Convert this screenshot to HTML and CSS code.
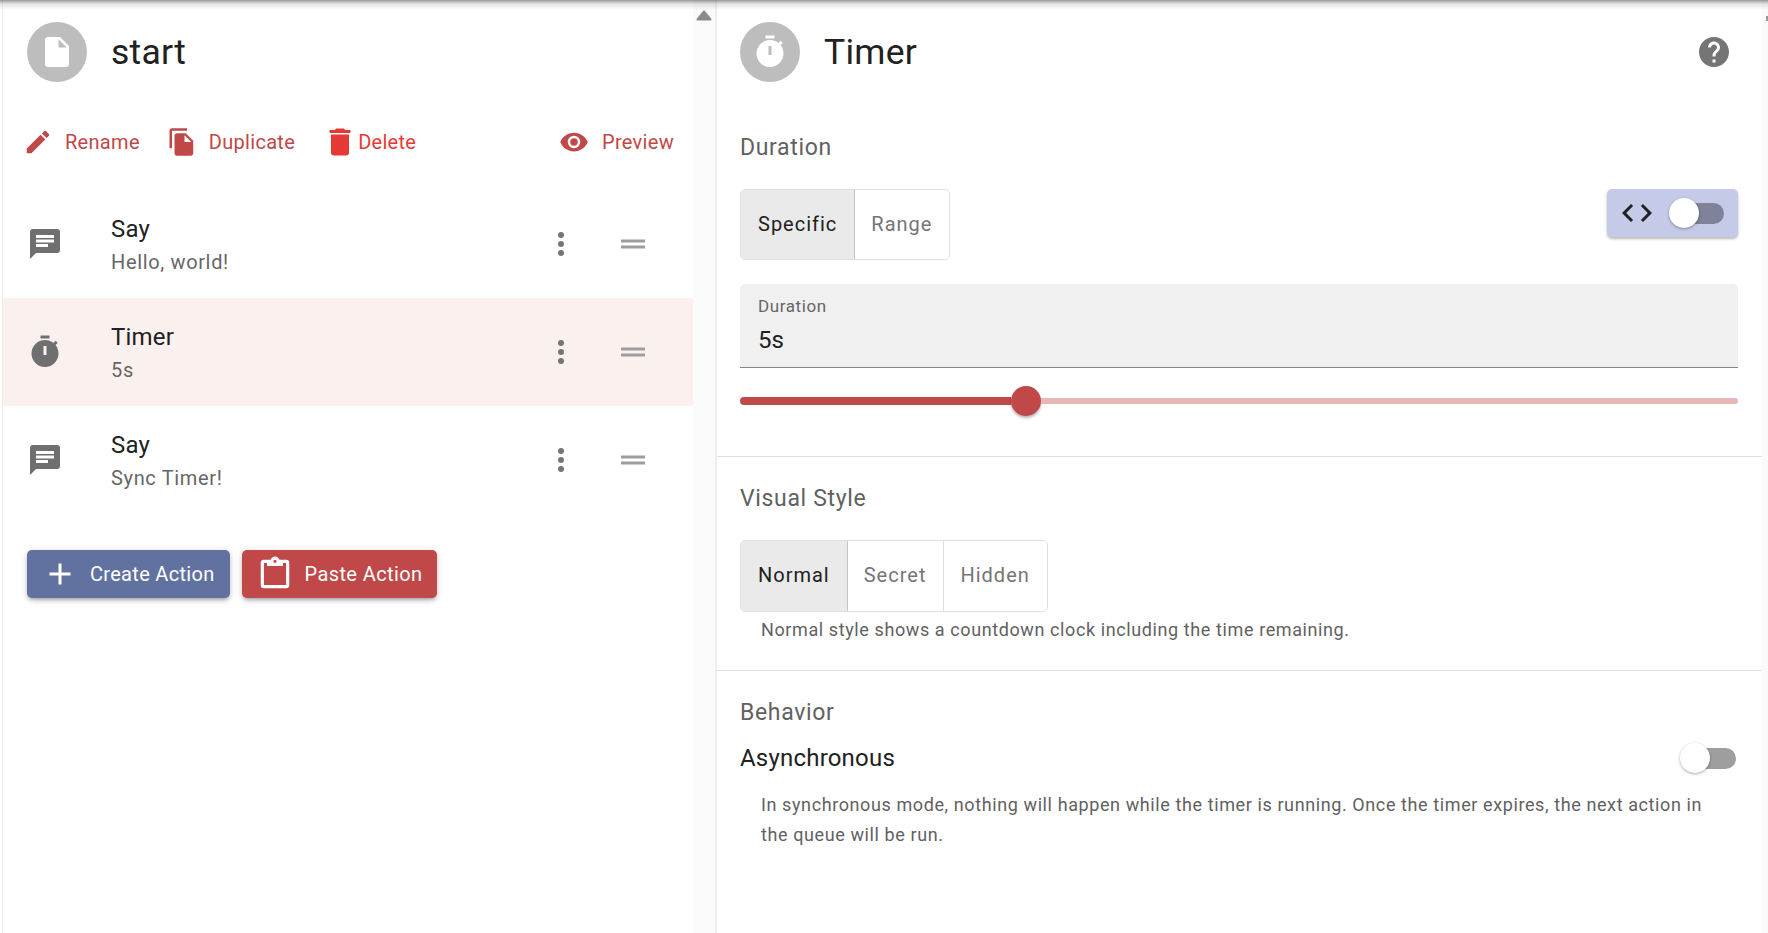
FILE: index.html
```html
<!DOCTYPE html>
<html lang="en">
<head>
  <meta charset="UTF-8" />
  <title>Timer Action</title>
  <link rel="stylesheet" href="styles.css">
</head>
<body>
  <div class="shade"></div>
  <div class="page">
    <section class="queue">
      <header class="head">
        <div class="avatar">
          <svg class="icon" viewBox="0 0 24 24"><path d="M13,9V3.5L18.5,9M6,2C4.89,2 4,2.89 4,4V20A2,2 0 0,0 6,22H18A2,2 0 0,0 20,20V8L14,2H6Z"/></svg>
        </div>
        <h1 class="title">start</h1>
      </header>

      <div class="tools">
        <button class="tool tool-rename">
          <svg class="icon-sm" viewBox="0 0 24 24"><path d="M20.71,7.04C21.1,6.65 21.1,6 20.71,5.63L18.37,3.29C18,2.9 17.35,2.9 16.96,3.29L15.12,5.12L18.87,8.87M3,17.25V21H6.75L17.81,9.93L14.06,6.18L3,17.25Z"/></svg>
          Rename
        </button>
        <button class="tool tool-duplicate">
          <svg class="icon-sm" viewBox="0 0 24 24"><path d="M16 1H4c-1.1 0-2 .9-2 2v14h2V3h12V1zm-1 4l6 6v10c0 1.1-.9 2-2 2H7.99C6.89 23 6 22.1 6 21l.01-14c0-1.1.89-2 1.99-2h7zm-1 7h5.5L14 6.5V12z"/></svg>
          Duplicate
        </button>
        <button class="tool tool-delete">
          <svg class="icon" viewBox="0 0 24 24"><path d="M19,4H15.5L14.5,3H9.5L8.5,4H5V6H19M6,19A2,2 0 0,0 8,21H16A2,2 0 0,0 18,19V7H6V19Z"/></svg>
          Delete
        </button>
        <button class="tool tool-preview">
          <svg class="icon-sm" viewBox="0 0 24 24"><path d="M12,9A3,3 0 0,0 9,12A3,3 0 0,0 12,15A3,3 0 0,0 15,12A3,3 0 0,0 12,9M12,17A5,5 0 0,1 7,12A5,5 0 0,1 12,7A5,5 0 0,1 17,12A5,5 0 0,1 12,17M12,4.5C7,4.5 2.73,7.61 1,12C2.73,16.39 7,19.5 12,19.5C17,19.5 21.27,16.39 23,12C21.27,7.61 17,4.5 12,4.5Z"/></svg>
          Preview
        </button>
      </div>

      <ul class="actions">
        <li class="action">
          <svg class="icon action-icon" viewBox="0 0 24 24"><path d="M20,2H4A2,2 0 0,0 2,4V22L6,18H20A2,2 0 0,0 22,16V4A2,2 0 0,0 20,2M6,9H18V11H6M14,14H6V12H14M18,8H6V6H18"/></svg>
          <div class="action-text">
            <div class="action-name">Say</div>
            <div class="action-sub">Hello, world!</div>
          </div>
          <svg class="icon action-menu" viewBox="0 0 24 24"><path d="M12,16A2,2 0 0,1 14,18A2,2 0 0,1 12,20A2,2 0 0,1 10,18A2,2 0 0,1 12,16M12,10A2,2 0 0,1 14,12A2,2 0 0,1 12,14A2,2 0 0,1 10,12A2,2 0 0,1 12,10M12,4A2,2 0 0,1 14,6A2,2 0 0,1 12,8A2,2 0 0,1 10,6A2,2 0 0,1 12,4Z"/></svg>
          <svg class="icon action-drag" viewBox="0 0 24 24"><path d="M20 9H4v2h16V9zm0 4H4v2h16v-2z"/></svg>
        </li>
        <li class="action selected">
          <svg class="icon action-icon" viewBox="0 0 24 24"><path fill-rule="evenodd" d="M15 1H9v2h6V1zm-4 13h2V8h-2v6zm8.03-6.61l1.42-1.42c-.43-.51-.9-.99-1.41-1.41l-1.42 1.42C16.07 4.74 14.12 4 12 4c-4.97 0-9 4.03-9 9s4.02 9 9 9 9-4.03 9-9c0-2.12-.74-4.07-1.97-5.61z"/></svg>
          <div class="action-text">
            <div class="action-name">Timer</div>
            <div class="action-sub">5s</div>
          </div>
          <svg class="icon action-menu" viewBox="0 0 24 24"><path d="M12,16A2,2 0 0,1 14,18A2,2 0 0,1 12,20A2,2 0 0,1 10,18A2,2 0 0,1 12,16M12,10A2,2 0 0,1 14,12A2,2 0 0,1 12,14A2,2 0 0,1 10,12A2,2 0 0,1 12,10M12,4A2,2 0 0,1 14,6A2,2 0 0,1 12,8A2,2 0 0,1 10,6A2,2 0 0,1 12,4Z"/></svg>
          <svg class="icon action-drag" viewBox="0 0 24 24"><path d="M20 9H4v2h16V9zm0 4H4v2h16v-2z"/></svg>
        </li>
        <li class="action">
          <svg class="icon action-icon" viewBox="0 0 24 24"><path d="M20,2H4A2,2 0 0,0 2,4V22L6,18H20A2,2 0 0,0 22,16V4A2,2 0 0,0 20,2M6,9H18V11H6M14,14H6V12H14M18,8H6V6H18"/></svg>
          <div class="action-text">
            <div class="action-name">Say</div>
            <div class="action-sub">Sync Timer!</div>
          </div>
          <svg class="icon action-menu" viewBox="0 0 24 24"><path d="M12,16A2,2 0 0,1 14,18A2,2 0 0,1 12,20A2,2 0 0,1 10,18A2,2 0 0,1 12,16M12,10A2,2 0 0,1 14,12A2,2 0 0,1 12,14A2,2 0 0,1 10,12A2,2 0 0,1 12,10M12,4A2,2 0 0,1 14,6A2,2 0 0,1 12,8A2,2 0 0,1 10,6A2,2 0 0,1 12,4Z"/></svg>
          <svg class="icon action-drag" viewBox="0 0 24 24"><path d="M20 9H4v2h16V9zm0 4H4v2h16v-2z"/></svg>
        </li>
      </ul>

      <div class="buttons">
        <button class="btn btn-create">
          <svg class="icon" viewBox="0 0 24 24"><path d="M19,13H13V19H11V13H5V11H11V5H13V11H19V13Z"/></svg>
          Create Action
        </button>
        <button class="btn btn-paste">
          <svg class="icon-lg" viewBox="0 0 24 24"><path d="M19,3H14.82C14.4,1.84 13.3,1 12,1C10.7,1 9.6,1.84 9.18,3H5A2,2 0 0,0 3,5V19A2,2 0 0,0 5,21H19A2,2 0 0,0 21,19V5A2,2 0 0,0 19,3M12,3A1,1 0 0,1 13,4A1,1 0 0,1 12,5A1,1 0 0,1 11,4A1,1 0 0,1 12,3M7,7H17V5H19V19H5V5H7V7Z"/></svg>
          Paste Action
        </button>
      </div>
    </section>

    <div class="scroll-strip">
      <svg class="scroll-arrow" viewBox="0 0 16 11"><path d="M8 1.5L14.5 9.5H1.5Z"/></svg>
    </div>

    <section class="editor">
      <header class="head head-editor">
        <div class="avatar">
          <svg class="icon" viewBox="0 0 24 24"><path fill-rule="evenodd" d="M15 1H9v2h6V1zm-4 13h2V8h-2v6zm8.03-6.61l1.42-1.42c-.43-.51-.9-.99-1.41-1.41l-1.42 1.42C16.07 4.74 14.12 4 12 4c-4.97 0-9 4.03-9 9s4.02 9 9 9 9-4.03 9-9c0-2.12-.74-4.07-1.97-5.61z"/></svg>
        </div>
        <h1 class="title title-editor">Timer</h1>
        <svg class="icon help" viewBox="0 0 24 24"><path d="M12 2C6.48 2 2 6.48 2 12s4.48 10 10 10 10-4.48 10-10S17.52 2 12 2zm1 17h-2v-2h2v2zm2.07-7.75l-.9.92C13.45 12.9 13 13.5 13 15h-2v-.5c0-1.1.45-2.1 1.17-2.83l1.24-1.26c.37-.36.59-.86.59-1.41 0-1.1-.9-2-2-2s-2 .9-2 2H8c0-2.21 1.79-4 4-4s4 1.79 4 4c0 .88-.36 1.68-.93 2.25z"/></svg>
      </header>

      <div class="block block-duration">
        <h2 class="block-title">Duration</h2>
        <div class="toggle-row">
          <div class="toggle">
            <div class="toggle-item active">Specific</div>
            <div class="toggle-item">Range</div>
          </div>
          <div class="code-toggle">
            <svg class="icon" viewBox="0 0 24 24"><path d="M14.6,16.6L19.2,12L14.6,7.4L16,6L22,12L16,18L14.6,16.6M9.4,16.6L4.8,12L9.4,7.4L8,6L2,12L8,18L9.4,16.6Z"/></svg>
            <div class="switch">
              <div class="switch-thumb"></div>
              <div class="switch-track"></div>
            </div>
          </div>
        </div>
        <div class="field">
          <div class="field-label">Duration</div>
          <div class="field-value">5s</div>
        </div>
        <div class="slider">
          <div class="slider-fill"></div>
          <div class="slider-thumb"></div>
          <div class="slider-rest"></div>
        </div>
      </div>

      <div class="block block-style">
        <h2 class="block-title">Visual Style</h2>
        <div class="toggle toggle-style">
          <div class="toggle-item active">Normal</div>
          <div class="toggle-item">Secret</div>
          <div class="toggle-item">Hidden</div>
        </div>
        <p class="hint hint-style">Normal style shows a countdown clock including the time remaining.</p>
      </div>

      <div class="block block-behavior">
        <h2 class="block-title">Behavior</h2>
        <div class="setting">
          <div class="setting-name">Asynchronous</div>
          <div class="switch switch-plain">
            <div class="switch-thumb"></div>
            <div class="switch-track"></div>
          </div>
        </div>
        <p class="hint">In synchronous mode, nothing will happen while the timer is running. Once the timer expires, the next action in the queue will be run.</p>
      </div>
    </section>

    <div class="edge-strip">
      <div class="edge-arrow"></div>
    </div>
  </div>
</body>
</html>
```

FILE: styles.css
```css
* {
  box-sizing: border-box;
}

html, body {
  margin: 0;
  padding: 0;
  height: 100%;
  overflow: hidden;
}

body {
  font-family: Roboto, "Liberation Sans", sans-serif;
  background-color: #fff;
  color: #212121;
}

.shade {
  position: absolute;
  top: 0;
  left: 0;
  right: 0;
  height: 10px;
  background: linear-gradient(to bottom, rgba(0, 0, 0, .4), rgba(0, 0, 0, .1) 4px, rgba(0, 0, 0, 0));
  z-index: 5;
}

.page {
  display: flex;
  height: 933px;
}

svg {
  display: block;
  fill: currentColor;
  flex: none;
}

.icon {
  width: 36px;
  height: 36px;
}

.icon-sm {
  width: 30px;
  height: 30px;
}

.icon-lg {
  width: 38px;
  height: 38px;
}

/* left column */
.queue {
  width: 691px;
  margin-left: 2px;
  border-left: 1px solid #eee;
  padding-top: 22px;
}

.scroll-strip {
  width: 22px;
  background-color: #fafafa;
  display: flex;
  justify-content: center;
  padding-top: 10px;
}

.scroll-arrow {
  width: 16px;
  height: 11px;
  color: #8a8a8a;
  stroke: currentColor;
  stroke-width: 2;
  stroke-linejoin: round;
}

.head {
  display: flex;
  align-items: center;
  padding-left: 24px;
  height: 60px;
}

.avatar {
  width: 60px;
  height: 60px;
  border-radius: 50%;
  background-color: #bdbdbd;
  color: #fff;
  display: flex;
  align-items: center;
  justify-content: center;
}

.title {
  margin: 0 0 0 24px;
  font-size: 35.5px;
  font-weight: 400;
  line-height: 48px;
  letter-spacing: .25px;
}

.tools {
  display: flex;
  align-items: center;
  height: 48px;
  margin-top: 36px;
  padding-left: 20px;
}

.tool {
  display: flex;
  align-items: center;
  border: none;
  background: none;
  padding: 0;
  font-family: inherit;
  font-size: 20px;
  letter-spacing: .3px;
  color: #c04848;
}

.tool-rename {
  gap: 12px;
}

.tool-duplicate {
  gap: 12px;
  margin-left: 27px;
}

.tool-delete {
  gap: 0;
  margin-left: 27px;
  color: #e53935;
}

.tool-preview {
  gap: 13px;
  margin-left: auto;
  margin-right: 19px;
}

.actions {
  list-style: none;
  margin: 24px 0 0;
  padding: 0;
}

.action {
  display: flex;
  align-items: center;
  height: 108px;
  padding-left: 24px;
  padding-right: 42px;
}

.action.selected {
  background-color: #faf1ef;
}

.action-icon {
  color: #6f6f6f;
}

.action-text {
  flex: 1;
  margin-left: 48px;
}

.action-name {
  margin-top: 1px;
  font-size: 24px;
  line-height: 30px;
  letter-spacing: .2px;
  color: #212121;
}

.action-sub {
  font-size: 20px;
  line-height: 28px;
  margin-top: 4px;
  letter-spacing: .65px;
  color: #666;
}

.action-menu {
  color: #757575;
}

.action-drag {
  color: #9e9e9e;
  margin-left: 36px;
}

.buttons {
  display: flex;
  gap: 12px;
  margin-top: 36px;
  padding-left: 24px;
}

.btn {
  display: flex;
  align-items: center;
  height: 48px;
  border: none;
  border-radius: 5px;
  color: #fff;
  font-family: inherit;
  font-size: 20px;
  letter-spacing: .3px;
  box-shadow: 0 3px 3px -2px rgba(0, 0, 0, .2), 0 3px 4px rgba(0, 0, 0, .14), 0 1px 8px rgba(0, 0, 0, .12);
}

.btn-create {
  gap: 12px;
  padding: 0 16px 0 15px;
  background-color: #6272a0;
}

.btn-paste {
  gap: 10px;
  padding: 0 15px 0 14px;
  background-color: #c04848;
  letter-spacing: .4px;
}

/* right column */
.editor {
  flex: 1;
  border-left: 2px solid #eee;
  padding-top: 22px;
}

.head-editor {
  padding-left: 23px;
  padding-right: 30px;
}

.title-editor {
  flex: 1;
}

.help {
  color: #757575;
}

.block {
  padding: 0 24px 0 23px;
  border-bottom: 1px solid #e0e0e0;
}

.block-duration {
  margin-top: 51px;
  padding-bottom: 40px;
}

.block-style {
  padding-top: 27px;
  padding-bottom: 25px;
}

.block-behavior {
  padding-top: 27px;
  border-bottom: none;
}

.block-title {
  margin: 0;
  font-size: 23px;
  font-weight: 400;
  line-height: 30px;
  letter-spacing: .65px;
  color: #616161;
}

.toggle-row {
  display: flex;
  justify-content: space-between;
  align-items: flex-start;
  margin-top: 26px;
}

.toggle {
  display: inline-flex;
  height: 71px;
  border: 1px solid #e0e0e0;
  border-radius: 5px;
  font-size: 20px;
  letter-spacing: 1px;
  color: #757575;
  overflow: hidden;
  vertical-align: top;
}

.toggle-style {
  height: 72px;
  margin-top: 26px;
}

.toggle-item {
  display: flex;
  align-items: center;
  padding: 0 17px 2px 16px;
  border-left: 1px solid #e0e0e0;
}

.toggle-item:first-child {
  border-left: none;
}

.toggle-item.active {
  padding: 0 17px 2px;
  background-color: #eaeaea;
  color: #212121;
  border-right: 1px solid #c4c4c4;
}

.toggle-item.active + .toggle-item {
  border-left: none;
}

.code-toggle {
  display: flex;
  align-items: center;
  gap: 14px;
  width: 131px;
  height: 48px;
  padding-left: 12px;
  background-color: #c5cae9;
  border-radius: 5px;
  box-shadow: 0 2px 3px rgba(0, 0, 0, .28);
}

.switch {
  display: flex;
  align-items: center;
}

.switch-thumb {
  position: relative;
  width: 30px;
  height: 30px;
  border-radius: 50%;
  background-color: #fff;
  box-shadow: 0 1px 3px rgba(0, 0, 0, .35);
}

.switch-track {
  width: 44px;
  height: 21px;
  margin-left: -19px;
  border-radius: 11px;
  background-color: #7f8299;
}

.switch-plain .switch-track {
  width: 41px;
  margin-left: -15px;
  background-color: #9e9e9e;
}

.field {
  margin-top: 24px;
  height: 84px;
  padding: 10px 18px 0;
  background-color: #f0f0f0;
  border-bottom: 1px solid #858585;
  border-radius: 5px 5px 0 0;
}

.field-label {
  font-size: 17px;
  line-height: 24px;
  letter-spacing: .6px;
  color: #666;
}

.field-value {
  font-size: 24px;
  line-height: 40px;
  margin-top: 2px;
  color: #212121;
}

.slider {
  display: flex;
  align-items: center;
  height: 30px;
  margin-top: 18px;
}

.slider-fill {
  width: 271px;
  height: 8px;
  background-color: #c04848;
  border-radius: 4px 0 0 4px;
}

.slider-thumb {
  width: 30px;
  height: 30px;
  border-radius: 50%;
  background-color: #c04848;
  box-shadow: 0 2px 3px rgba(0, 0, 0, .3);
}

.slider-rest {
  flex: 1;
  height: 6px;
  background-color: #e8b6b6;
  border-radius: 0 3px 3px 0;
}

.hint {
  margin: 3px 0 0;
  padding-left: 21px;
  font-size: 18px;
  line-height: 30px;
  letter-spacing: .6px;
  color: #616161;
}

.setting {
  display: flex;
  align-items: center;
  justify-content: space-between;
  height: 30px;
  margin-top: 15px;
  padding-right: 2px;
}

.setting-name {
  font-size: 24px;
  letter-spacing: .2px;
}

.block-behavior .hint {
  margin-top: 17px;
  padding-right: 30px;
}

.edge-strip {
  width: 6px;
  background-color: #fafafa;
  padding-top: 16px;
}

.edge-arrow {
  width: 2px;
  height: 5px;
  margin-left: 4px;
  background-color: #999;
}
```
